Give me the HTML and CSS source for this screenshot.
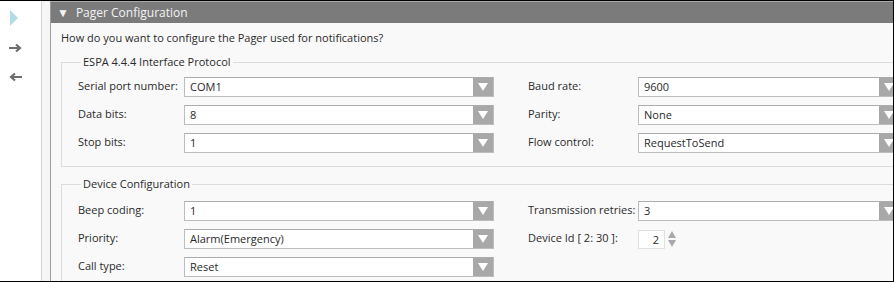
FILE: index.html
```html
<!DOCTYPE html>
<html>
<head>
<meta charset="utf-8">
<title>Pager Configuration</title>
<link rel="stylesheet" href="styles.css">
</head>
<body>
<div class="window">
	<div class="sidebar">
		<svg class="ico" width="14" height="18" viewBox="0 0 14 18"><polygon points="1,1 9,9 1,17" fill="#b3dae5"/></svg>
		<svg class="ico" width="14" height="10" viewBox="0 0 14 10"><path d="M0 5 H10 M7 1.5 L11 5 L7 8.5" stroke="#6e6e6e" stroke-width="2.2" fill="none"/></svg>
		<svg class="ico" width="14" height="10" viewBox="0 0 14 10"><path d="M13 5 H3 M6 1.5 L2 5 L6 8.5" stroke="#6e6e6e" stroke-width="2.2" fill="none"/></svg>
	</div>
	<div class="gutter"></div>
	<div class="panel">
		<div class="panel_head"><span class="caret">&#9660;</span>Pager Configuration</div>
		<div class="panel_body">
			<p class="question">How do you want to configure the Pager used for notifications?</p>

			<fieldset class="group">
				<legend>ESPA 4.4.4 Interface Protocol</legend>
				<div class="form_grid">
					<label>Serial port number:</label>
					<div class="combo"><span>COM1</span><i class="drop"></i></div>
					<label class="r">Baud rate:</label>
					<div class="combo"><span>9600</span><i class="drop"></i></div>

					<label>Data bits:</label>
					<div class="combo"><span>8</span><i class="drop"></i></div>
					<label class="r">Parity:</label>
					<div class="combo"><span>None</span><i class="drop"></i></div>

					<label>Stop bits:</label>
					<div class="combo"><span>1</span><i class="drop"></i></div>
					<label class="r">Flow control:</label>
					<div class="combo"><span>RequestToSend</span><i class="drop"></i></div>
				</div>
			</fieldset>

			<fieldset class="group group2">
				<legend>Device Configuration</legend>
				<div class="form_grid">
					<label>Beep coding:</label>
					<div class="combo"><span>1</span><i class="drop"></i></div>
					<label class="r">Transmission retries:</label>
					<div class="combo"><span>3</span><i class="drop"></i></div>

					<label>Priority:</label>
					<div class="combo"><span>Alarm(Emergency)</span><i class="drop"></i></div>
					<label class="r">Device Id [ 2: 30 ]:</label>
					<div class="spin_wrap">
						<div class="spin">2</div>
						<svg width="10" height="18" viewBox="0 0 10 18"><polygon points="5,1 9,8 1,8" fill="#a9a9a9"/><polygon points="1,10 9,10 5,17" fill="#a9a9a9"/></svg>
					</div>

					<label>Call type:</label>
					<div class="combo"><span>Reset</span><i class="drop"></i></div>
				</div>
			</fieldset>
		</div>
	</div>
</div>
</body>
</html>
```

FILE: styles.css
```css
*{margin:0;padding:0;box-sizing:border-box;}
html,body{width:894px;height:282px;overflow:hidden;}
body{font-family:"Open Sans","Noto Sans",sans-serif;font-size:11px;color:#2a2a2a;background:#fff;}

.window{display:flex;height:282px;border-top:1px solid #000;border-right:1px solid #000;border-bottom:1px solid #000;}

.sidebar{width:42px;flex:none;background:#fff;border-right:1px solid #d4d4d4;display:flex;flex-direction:column;align-items:flex-start;padding:8px 0 0 9px;}
.sidebar .ico{display:block;}
.sidebar .ico:nth-child(2){margin-top:16px;}
.sidebar .ico:nth-child(3){margin-top:19px;}

.gutter{width:8px;flex:none;background:#f6f6f6;}

.panel{flex:1;min-width:0;overflow:hidden;background:#f9f9f9;border-left:1px solid #9c9c9c;}
.panel_head{height:22px;border-top:1px solid #a9a9a9;background:#7b7b7b;color:#f4f4f4;font-size:12px;line-height:21px;padding-left:6px;white-space:nowrap;}
.caret{font-size:12px;margin-right:7px;}

.panel_body{padding:7px 0 0 10px;width:900px;}
.question{line-height:16px;height:16px;white-space:nowrap;}

.group{border:1px solid #dcdcdc;margin-top:8px;padding:7px 0 13px 16px;}
.group legend{margin-left:3px;padding:0 2px;line-height:16px;font-size:11px;}
.group2{margin-top:9px;padding-top:9px;padding-bottom:6px;}

.form_grid{display:grid;grid-template-columns:106px 310px 34px 110px 262px;grid-auto-rows:20px;row-gap:8px;}
.form_grid label{line-height:16px;padding-top:1px;white-space:nowrap;}
.form_grid .r{grid-column:4;}

.combo{display:flex;height:20px;background:#fff;border:1px solid #bdbdbd;border-top-color:#acacac;}
.combo span{flex:1;line-height:18px;padding-left:5px;white-space:nowrap;overflow:hidden;}
.drop{width:20px;flex:none;background:#a8a8a8;display:flex;align-items:center;justify-content:center;}
.drop:after{content:"";border-left:5px solid transparent;border-right:5px solid transparent;border-top:8px solid #fff;}

.spin_wrap{display:flex;align-items:center;gap:2px;}
.spin{width:27px;height:19px;background:#fff;border:1px solid #e0e0e0;text-align:right;padding-right:5px;line-height:17px;}
```
